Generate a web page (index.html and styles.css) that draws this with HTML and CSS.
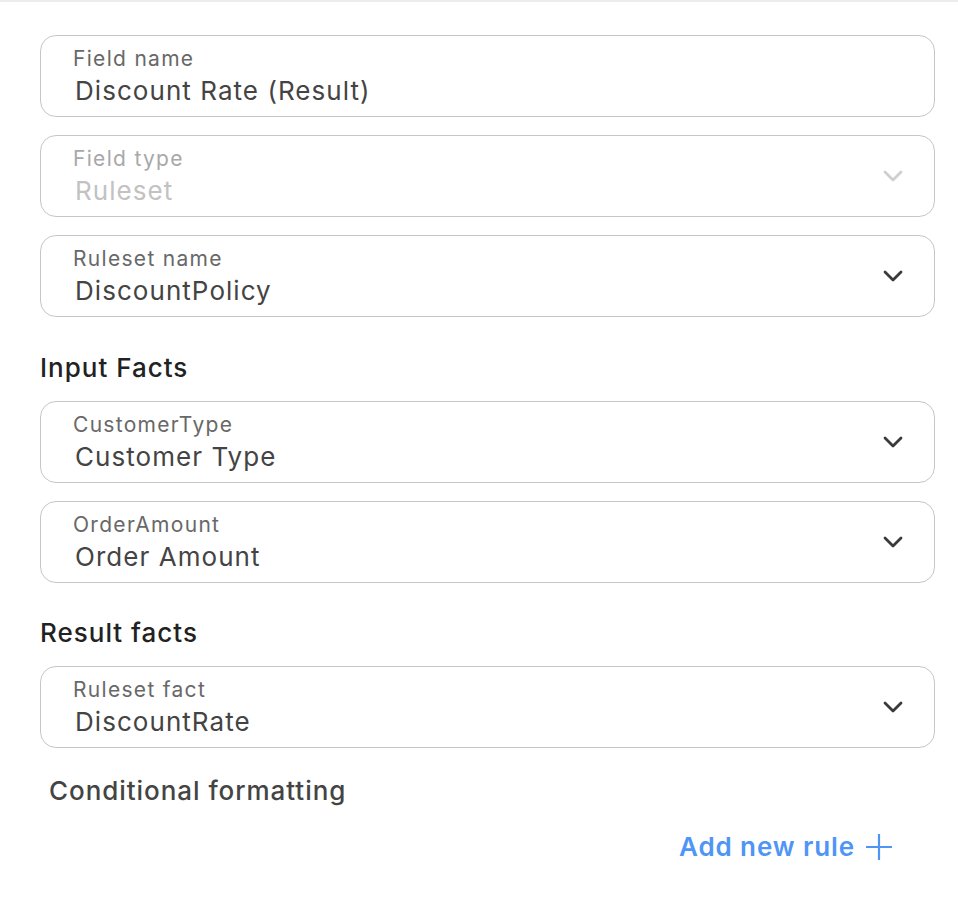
FILE: index.html
```html
<!DOCTYPE html>
<html>
<head>
<meta charset="utf-8">
<link rel="stylesheet" href="styles.css">
</head>
<body>
<div class="topline"></div>
<div class="panel">
  <div class="field">
    <div class="texts">
      <div class="label">Field name</div>
      <div class="value">Discount Rate (Result)</div>
    </div>
  </div>
  <div class="field disabled">
    <div class="texts">
      <div class="label">Field type</div>
      <div class="value">Ruleset</div>
    </div>
    <svg class="chev" width="22" height="14" viewBox="0 0 22 14"><path d="M3 3 L11 11 L19 3" fill="none" stroke-width="2.8" stroke-linecap="round" stroke-linejoin="round"/></svg>
  </div>
  <div class="field">
    <div class="texts">
      <div class="label">Ruleset name</div>
      <div class="value">DiscountPolicy</div>
    </div>
    <svg class="chev" width="22" height="14" viewBox="0 0 22 14"><path d="M3 3 L11 11 L19 3" fill="none" stroke-width="2.8" stroke-linecap="round" stroke-linejoin="round"/></svg>
  </div>
  <h2 class="heading">Input Facts</h2>
  <div class="field">
    <div class="texts">
      <div class="label">CustomerType</div>
      <div class="value">Customer Type</div>
    </div>
    <svg class="chev" width="22" height="14" viewBox="0 0 22 14"><path d="M3 3 L11 11 L19 3" fill="none" stroke-width="2.8" stroke-linecap="round" stroke-linejoin="round"/></svg>
  </div>
  <div class="field">
    <div class="texts">
      <div class="label">OrderAmount</div>
      <div class="value">Order Amount</div>
    </div>
    <svg class="chev" width="22" height="14" viewBox="0 0 22 14"><path d="M3 3 L11 11 L19 3" fill="none" stroke-width="2.8" stroke-linecap="round" stroke-linejoin="round"/></svg>
  </div>
  <h2 class="heading heading-result">Result facts</h2>
  <div class="field">
    <div class="texts">
      <div class="label">Ruleset fact</div>
      <div class="value">DiscountRate</div>
    </div>
    <svg class="chev" width="22" height="14" viewBox="0 0 22 14"><path d="M3 3 L11 11 L19 3" fill="none" stroke-width="2.8" stroke-linecap="round" stroke-linejoin="round"/></svg>
  </div>
  <div class="subheading">Conditional formatting</div>
  <div class="actions">
    <button class="add">Add new rule
      <svg class="plus" width="28" height="28" viewBox="0 0 28 28"><path d="M14 1 V27 M1 14 H27" fill="none" stroke-width="2.2"/></svg>
    </button>
  </div>
</div>
</body>
</html>
```
FILE: styles.css
```css
html, body {
  margin: 0;
  padding: 0;
  background: #fff;
  font-family: Inter, "Noto Sans", sans-serif;
}
.topline {
  height: 2px;
  background: #ececec;
}
.panel {
  padding: 33px 23px 0 40px;
  display: flex;
  flex-direction: column;
}
.field {
  box-sizing: border-box;
  height: 82px;
  border: 1.5px solid #c6c6c6;
  border-radius: 16px;
  display: flex;
  align-items: center;
  padding: 0 30px 0 32px;
  margin-bottom: 18px;
}
.texts {
  flex: 1;
  display: flex;
  flex-direction: column;
  margin-top: 1px;
}
.label {
  font-size: 21px;
  line-height: 24px;
  letter-spacing: 1.3px;
  color: #686868;
}
.value {
  font-size: 26px;
  line-height: 32px;
  letter-spacing: 1.05px;
  color: #444;
  font-weight: 400;
  margin-left: 2px;
  margin-top: 4px;
}
.chev path { stroke: #3a3a3a; }
.disabled .label { color: #a8a8a8; }
.disabled .value { color: #c2c2c2; }
.disabled .chev path { stroke: #cfcfcf; }
.heading {
  margin: 17px 0 17px;
  font-size: 26px;
  line-height: 32px;
  letter-spacing: 1px;
  font-weight: 500;
  color: #222;
}
.heading-result {
  margin-top: 16px;
}
.subheading {
  margin: 9px 0 0 9px;
  font-size: 26px;
  line-height: 32px;
  letter-spacing: 0.95px;
  font-weight: 500;
  color: #444;
}
.actions {
  display: flex;
  justify-content: flex-end;
  padding-right: 42px;
  margin-top: 24px;
}
.add {
  border: none;
  background: none;
  padding: 0;
  font-family: inherit;
  font-size: 26px;
  font-weight: 600;
  letter-spacing: 0.9px;
  color: #4f95f5;
  display: flex;
  align-items: center;
  gap: 10px;
}
.plus path { stroke: #4f95f5; }
```
